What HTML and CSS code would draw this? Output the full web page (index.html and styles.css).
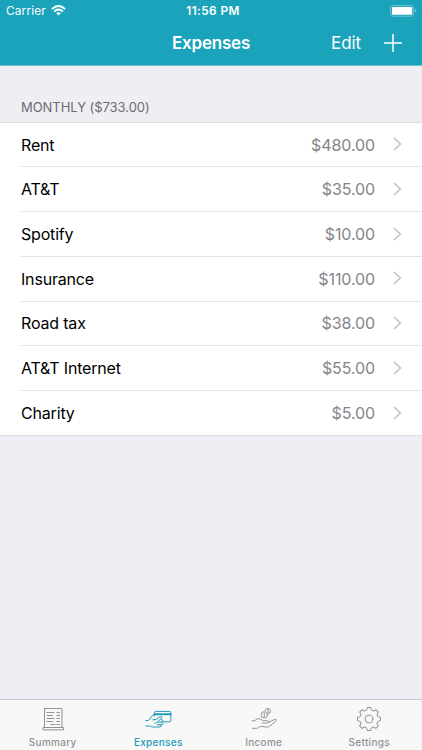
FILE: index.html
```html
<!DOCTYPE html>
<html lang="en">
<head>
<meta charset="utf-8">
<title>Expenses</title>
<link rel="stylesheet" href="styles.css">
</head>
<body>
<div class="app">
  <header class="header">
    <div class="status">
      <div class="carrier"><span>Carrier</span>
        <svg class="wifi" width="15" height="11" viewBox="0 0 15 11" fill="none" stroke="#fff" stroke-width="1.9"><path d="M.8 4.1Q7.5-1.9 14.2 4.1M3.1 6.5Q7.5 2.6 11.9 6.5"/><path d="M5.2 8.2Q7.5 6.3 9.8 8.2L7.5 10.5Z" fill="#fff" stroke="none"/></svg>
      </div>
      <div class="time">11:56 PM</div>
      <svg class="battery" width="27" height="12" viewBox="0 0 27 12"><rect x=".6" y=".6" width="23" height="10.6" rx="2.4" fill="none" stroke="#72c6d5"/><rect x="2" y="2" width="20.2" height="7.8" rx="1" fill="#fff"/><path d="M24.9 4.1q1.4.6 1.4 1.8t-1.4 1.8z" fill="#72c6d5"/></svg>
    </div>
    <div class="nav">
      <h1 class="title">Expenses</h1>
      <div class="actions"><span class="edit">Edit</span>
        <svg width="18" height="18" viewBox="0 0 18 18" stroke="#fff" stroke-width="1.5"><path d="M0 9h18M9 0v18"/></svg>
      </div>
    </div>
  </header>
  <main class="content">
    <h2 class="section">MONTHLY ($733.00)</h2>
    <ul class="list">
      <li class="row"><span class="name">Rent</span><span class="amount">$480.00</span><svg class="chevron" viewBox="0 0 9 14"><path d="M1 1l6.3 6L1 13"/></svg></li>
      <li class="row"><span class="name">AT&amp;T</span><span class="amount">$35.00</span><svg class="chevron" viewBox="0 0 9 14"><path d="M1 1l6.3 6L1 13"/></svg></li>
      <li class="row"><span class="name">Spotify</span><span class="amount">$10.00</span><svg class="chevron" viewBox="0 0 9 14"><path d="M1 1l6.3 6L1 13"/></svg></li>
      <li class="row"><span class="name">Insurance</span><span class="amount">$110.00</span><svg class="chevron" viewBox="0 0 9 14"><path d="M1 1l6.3 6L1 13"/></svg></li>
      <li class="row"><span class="name">Road tax</span><span class="amount">$38.00</span><svg class="chevron" viewBox="0 0 9 14"><path d="M1 1l6.3 6L1 13"/></svg></li>
      <li class="row"><span class="name">AT&amp;T Internet</span><span class="amount">$55.00</span><svg class="chevron" viewBox="0 0 9 14"><path d="M1 1l6.3 6L1 13"/></svg></li>
      <li class="row"><span class="name">Charity</span><span class="amount">$5.00</span><svg class="chevron" viewBox="0 0 9 14"><path d="M1 1l6.3 6L1 13"/></svg></li>
    </ul>
  </main>
  <nav class="tabs">
    <div class="tab">
      <svg class="icon" viewBox="0 0 28 26"><path d="M5.5 2.5h17.5v19M5.5 2.5v19M4.5 21.5h20v2.4h-20z"/><path d="M8 6.5h7M8 9.5h5.5M8 12.5h7M8 15.5h5.5M12 18.5h4M18 6.5h2.5M18 9.5h2.5M18 12.5h2.5M18 15.5h2.5M18 18.5h2.5" stroke-width="1.2"/></svg>
      <span>Summary</span>
    </div>
    <div class="tab active">
      <svg class="icon" viewBox="0 0 28 26"><path d="M10.4 10V6.5q0-1.1 1.1-1.1h14.2q1.1 0 1.1 1.1v8.2q0 1.1-1.1 1.1h-6.1"/><path d="M10.4 8.2h16.4" stroke-width="1.9"/><path d="M1.8 14.6h2.6l4-5q.6-.8 2-.8M8.8 13.9l3.2-.4 3.8-2.6q1.5-.8 2 .1.4.8-.6 1.6l-3.5 3M1.8 20h3.4q1.1 0 2 .6l1 .4h7.4q1.6 0 1.6-1.2 0-1-1.4-1h-2.6M15.8 18.8h1.6q1.6 0 1.6-1.4t-1.5-1.3h-3.3M17.8 16.1q1.3-.2 1.2-1.4-.2-1-1.6-1M13.3 16.1q-.8 1.5-2.4 1.3"/></svg>
      <span>Expenses</span>
    </div>
    <div class="tab">
      <svg class="icon" viewBox="0 0 28 26"><circle cx="14.3" cy="8.8" r="3.2"/><path d="M15 4.3a2.8 2.8 0 1 1 3 3.7M14.3 7.1v3.6M17.9 3.2v3.2"/><path d="M2 14.7h2.8q1.4-2 3.9-2 1.8 0 3.2 1.3l1.3.7h4.2q1.5 0 1.5 1.1t-1.5 1.2h-5.1M18.6 16.4l5.3-2.6q1.9-.9 2.5-.1.5.9-.8 1.8l-6.3 4.9q-1.3 1-3.1.7l-4.4-.7q-1.8-.2-3.2 1-.9.8-1.8.9H2.6"/></svg>
      <span>Income</span>
    </div>
    <div class="tab">
      <svg class="icon" viewBox="0 0 28 26">
        <defs><path id="tooth" d="M-3.44-8.31Q-2.2-8.6-2.1-9.6L-1.8-11.5H1.8L2.1-9.6Q2.2-8.6 3.44-8.31"/></defs>
        <g transform="translate(14 13)"><circle r="3.9"/><use href="#tooth"/><use href="#tooth" transform="rotate(45)"/><use href="#tooth" transform="rotate(90)"/><use href="#tooth" transform="rotate(135)"/><use href="#tooth" transform="rotate(180)"/><use href="#tooth" transform="rotate(225)"/><use href="#tooth" transform="rotate(270)"/><use href="#tooth" transform="rotate(315)"/></g>
      </svg>
      <span>Settings</span>
    </div>
  </nav>
</div>
</body>
</html>
```
FILE: styles.css
```css
* { box-sizing: border-box; }
body { margin: 0; font-family: Inter, "Liberation Sans", sans-serif; }
.app { width: 422px; height: 750px; display: flex; flex-direction: column; background: #efeef4; overflow: hidden; }
.header { height: 66px; background: #1aa3bb; color: #fff; border-bottom: 1px solid #6fbfd0; }
.status { height: 21px; display: grid; grid-template-columns: 1fr auto 1fr; align-items: center; padding: 0 5px 0 6px; }
.carrier { display: flex; align-items: center; gap: 5px; font-size: 11.8px; letter-spacing: .18px; }
.time { font-size: 11.8px; font-weight: 600; letter-spacing: .4px; padding-left: 3px; }
.battery { justify-self: end; }
.nav { height: 44px; display: grid; grid-template-columns: 1fr auto 1fr; align-items: center; }
.title { grid-column: 2; margin: 0; font-size: 17px; font-weight: 600; letter-spacing: -.2px; }
.actions { justify-self: end; display: flex; align-items: center; gap: 23px; padding-right: 20px; }
.edit { font-size: 17px; letter-spacing: -.1px; }
.content { flex: 1; }
.section { margin: 0; height: 56px; padding: 33px 21px 0; font-size: 13px; line-height: 16px; font-weight: 400; letter-spacing: -.05px; color: #6d6d72; }
.list { margin: 0; padding: 0; list-style: none; background: #fff; border-top: 1px solid #dddce1; border-bottom: 1px solid #dddce1; }
.row { height: 44.8px; margin-left: 21px; display: flex; align-items: center; padding-right: 20px; font-size: 16px; letter-spacing: -.18px; border-bottom: 1px solid #e3e3e5; }
.row:first-child { height: 44.2px; }
.row:last-child { border-bottom: 0; height: 43.8px; }
.name { color: #000; }
.amount { margin-left: auto; color: #858589; letter-spacing: -.1px; }
.chevron { width: 9px; height: 14px; margin: 0 0 .5px 18px; fill: none; stroke: #c5c5ca; stroke-width: 1.7; }
.tabs { height: 51px; display: grid; grid-template-columns: repeat(4, 1fr); background: #f8f8f8; border-top: 1px solid #c8c8cc; }
.tab { display: flex; flex-direction: column; align-items: center; padding-top: 6px; color: #929292; font-size: 10px; line-height: 12px; font-weight: 500; letter-spacing: .3px; }
.tab.active { color: #1c9bb8; }
.icon { width: 28px; height: 26px; margin-bottom: 4px; fill: none; stroke: currentColor; stroke-width: 1; stroke-linecap: round; stroke-linejoin: round; }
```
